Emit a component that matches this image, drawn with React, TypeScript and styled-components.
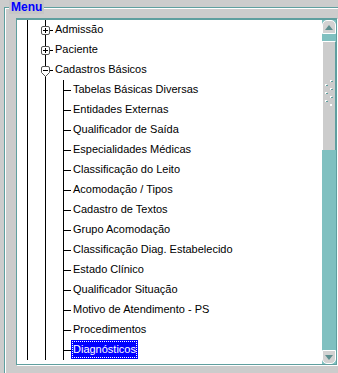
import React from "react";
import styled, { createGlobalStyle } from "styled-components";

const TEAL = "#5f9f9f";
const TRACK = "#80c0c0";
const INK = "#000";

const GlobalStyle = createGlobalStyle`
  html, body {
    margin: 0;
    padding: 0;
  }
  body {
    width: 338px;
    height: 373px;
    overflow: hidden;
    background: #cccccc;
    font-family: "Liberation Sans", Arial, sans-serif;
    font-size: 11px;
    color: #000;
  }
`;

const Group = styled.div`
  margin: 7px 0 0 4px;
  height: 380px;
  border-top: 1px solid ${TEAL};
  border-left: 1px solid ${TEAL};
  box-shadow: inset 1px 1px 0 #fff;
  padding-left: 11px;
`;

const Legend = styled.div`
  width: fit-content;
  margin: -8px 0 0 -7px;
  height: 14px;
  line-height: 14px;
  padding: 0 2px;
  background: #c6c6c6;
  color: #0000ff;
  font-weight: bold;
  font-size: 12px;
`;

const Panel = styled.div`
  margin-top: 4px;
  width: 321px;
  height: 347px;
  box-sizing: border-box;
  border: 1px solid ${TEAL};
  border-top-width: 2px;
  box-shadow: 1px 1px 0 #fff;
  background: #fff;
  display: flex;
`;

const Tree = styled.div`
  flex: 1;
  overflow: hidden;
`;

const Row = styled.div`
  display: flex;
  align-items: flex-start;
  height: 20px;
  white-space: nowrap;
`;

type CellKind = "line" | "tee" | "node";

const vline = `linear-gradient(${INK}, ${INK}) 10px 0 / 1px 100% no-repeat`;
const cellBg: Record<CellKind, string> = {
  line: vline,
  tee: `linear-gradient(${INK}, ${INK}) 10px 10px / 8px 1px no-repeat, ${vline}`,
  node: `linear-gradient(${INK}, ${INK}) 14px 10px / 4px 1px no-repeat, ${vline}`,
};

const Cell = styled.span<{ $kind: CellKind }>`
  flex: none;
  width: 18px;
  height: 20px;
  display: flex;
  align-items: flex-start;
  background: ${(p) => cellBg[p.$kind]};
`;

const Expander = styled.svg`
  margin: 6px 0 0 6px;
  overflow: visible;
`;

const Label = styled.span<{ $selected?: boolean }>`
  display: block;
  height: 19px;
  line-height: 19px;
  padding: 0 2px;
  box-sizing: border-box;
  background: ${(p) => (p.$selected ? "#0000ff" : "transparent")};
  color: ${(p) => (p.$selected ? "#fff" : "#000")};
  outline: ${(p) => (p.$selected ? "1px dotted #fff" : "none")};
  outline-offset: -2px;
`;

const Scrollbar = styled.div`
  flex: none;
  width: 14px;
  display: flex;
  flex-direction: column;
  background: ${TRACK};
`;

const ArrowButton = styled.div<{ $down?: boolean }>`
  flex: none;
  height: 14px;
  box-sizing: border-box;
  background: #d2d2d2;
  border: 1px solid #fff;
  border-radius: ${(p) => (p.$down ? "0 0 5px 5px" : "5px 5px 0 0")};
  display: flex;
  align-items: center;
  justify-content: center;
`;

const Track = styled.div`
  flex: 1;
  padding-top: 7px;
`;

const Thumb = styled.div`
  height: 109px;
  box-sizing: border-box;
  background: #cccccc;
  border-top: 1px solid #fff;
  border-left: 1px solid #fff;
  border-right: 1px solid ${TEAL};
  display: flex;
  justify-content: center;
  padding-top: 38px;
`;

const Arrow = ({ down }: { down?: boolean }) => (
  <svg width="8" height="5" viewBox="0 0 8 5">
    <path d={down ? "M0 0 H8 L4 5 Z" : "M0 5 H8 L4 0 Z"} fill="#5d8f8f" />
  </svg>
);

const Gripper = () => (
  <svg width="8" height="26" viewBox="0 0 8 26">
    {[0, 8, 16].map((y) => (
      <g key={"r" + y}>
        <rect x="5" y={y} width="2" height="2" fill="#fff" />
        <rect x="6" y={y + 1} width="2" height="1" fill={TEAL} />
      </g>
    ))}
    {[4, 12, 20].map((y) => (
      <g key={"l" + y}>
        <rect x="0" y={y} width="2" height="2" fill="#fff" />
        <rect x="1" y={y + 1} width="2" height="1" fill={TEAL} />
      </g>
    ))}
    <rect x="5" y="24" width="2" height="2" fill="#fff" />
  </svg>
);

const PlusBox = () => (
  <Expander width="9" height="9" viewBox="0 0 9 9">
    <rect x="0.5" y="0.5" width="8" height="8" rx="1.5" fill="#fff" stroke="#555" />
    <path d="M2 4.5 H7 M4.5 2 V7" stroke="#000" />
  </Expander>
);

const MinusShield = () => (
  <Expander width="9" height="9" viewBox="0 0 9 9">
    <path
      d="M0.5 2 Q0.5 0.5 2 0.5 H7 Q8.5 0.5 8.5 2 V6.5 L4.5 10.5 L0.5 6.5 Z"
      fill="#fff"
      stroke="#555"
    />
    <path d="M2 4.5 H7" stroke="#000" />
  </Expander>
);

type Item = { label: string; level: 1 | 2; open?: boolean; selected?: boolean };

const items: Item[] = [
  { label: "Admissão", level: 1, open: false },
  { label: "Paciente", level: 1, open: false },
  { label: "Cadastros Básicos", level: 1, open: true },
  { label: "Tabelas Básicas Diversas", level: 2 },
  { label: "Entidades Externas", level: 2 },
  { label: "Qualificador de Saída", level: 2 },
  { label: "Especialidades Médicas", level: 2 },
  { label: "Classificação do Leito", level: 2 },
  { label: "Acomodação / Tipos", level: 2 },
  { label: "Cadastro de Textos", level: 2 },
  { label: "Grupo Acomodação", level: 2 },
  { label: "Classificação Diag. Estabelecido", level: 2 },
  { label: "Estado Clínico", level: 2 },
  { label: "Qualificador Situação", level: 2 },
  { label: "Motivo de Atendimento - PS", level: 2 },
  { label: "Procedimentos", level: 2 },
  { label: "Diagnósticos", level: 2, selected: true },
];

const TreeRow = ({ item }: { item: Item }) => (
  <Row>
    <Cell $kind="line" />
    {item.level === 1 ? (
      <Cell $kind="node">{item.open ? <MinusShield /> : <PlusBox />}</Cell>
    ) : (
      <>
        <Cell $kind="line" />
        <Cell $kind="tee" />
      </>
    )}
    <Label $selected={item.selected}>{item.label}</Label>
  </Row>
);

export default function App() {
  return (
    <>
      <GlobalStyle />
      <Group>
        <Legend>Menu</Legend>
        <Panel>
          <Tree>
            {items.map((it) => (
              <TreeRow key={it.label} item={it} />
            ))}
          </Tree>
          <Scrollbar>
            <ArrowButton>
              <Arrow />
            </ArrowButton>
            <Track>
              <Thumb>
                <Gripper />
              </Thumb>
            </Track>
            <ArrowButton $down>
              <Arrow down />
            </ArrowButton>
          </Scrollbar>
        </Panel>
      </Group>
    </>
  );
}
